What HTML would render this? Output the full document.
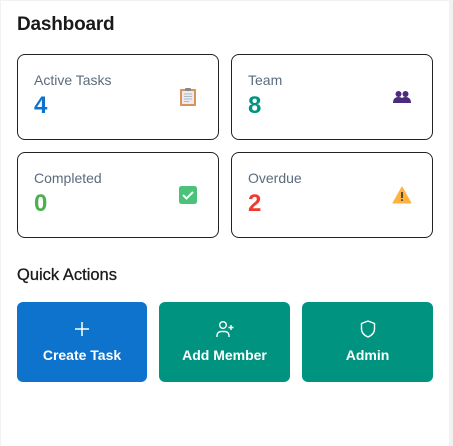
<!DOCTYPE html>
<html><head><style>
*{margin:0;padding:0;box-sizing:border-box}
html,body{width:453px;height:446px;background:#f2f2f2;overflow:hidden;font-family:"Liberation Sans",sans-serif}
.panel{position:absolute;left:1px;top:1px;width:448px;height:445px;background:#fff}
h1{position:absolute;left:17px;top:14px;font-size:19px;font-weight:bold;color:#1a1a1a;letter-spacing:-0.2px}
h2{position:absolute;left:17px;top:266px;font-size:16.5px;font-weight:normal;color:#1a1a1a;-webkit-text-stroke:0.3px #1a1a1a}
.card{position:absolute;width:202px;height:86px;border:1px solid #222;border-radius:8px;background:#fff}
.lbl{position:absolute;left:16px;top:17px;font-size:14px;color:#5b6b7d}
.num{position:absolute;left:16px;top:37px;font-size:24px;font-weight:bold}
.ic{position:absolute;left:160px;top:32px;width:20px;height:20px}
.btn{position:absolute;top:302px;height:80px;border-radius:6px;color:#fff;text-align:center}
.btn svg{position:absolute;left:50%;top:17px;margin-left:-10px}
.btn span{position:absolute;left:0;right:0;top:45px;font-size:14px;font-weight:bold}
</style></head><body>
<div class="panel"></div>
<h1>Dashboard</h1>
<div class="card" style="left:17px;top:54px"><div class="lbl">Active Tasks</div><div class="num" style="color:#0b72d0">4</div>
<svg class="ic" viewBox="0 0 20 20"><rect x="2" y="2" width="16" height="17" rx="1" fill="#d8935a"/><rect x="4" y="4" width="12" height="13" fill="#eceaf0"/><rect x="7" y="1" width="6" height="3" rx="1" fill="#888"/><path d="M6 7h8M6 9.5h8M6 12h8M6 14.5h5" stroke="#9aa" stroke-width="0.8"/></svg></div>
<div class="card" style="left:231px;top:54px"><div class="lbl">Team</div><div class="num" style="color:#009480">8</div>
<svg class="ic" viewBox="0 0 20 20"><circle cx="6.5" cy="7" r="3" fill="#4a2b7e"/><circle cx="13.5" cy="7" r="3" fill="#4a2b7e"/><path d="M1 16c0-4 2-6 5.5-6S12 12 12 16z" fill="#4a2b7e"/><path d="M8 16c0-4 2-6 5.5-6S19 12 19 16z" fill="#4a2b7e"/></svg></div>
<div class="card" style="left:17px;top:152px"><div class="lbl">Completed</div><div class="num" style="color:#4caf50">0</div>
<svg class="ic" viewBox="0 0 20 20"><rect x="1" y="1" width="18" height="18" rx="2.5" fill="#4bc27a"/><path d="M5 10l3.5 3.5L15 7" stroke="#fff" stroke-width="2" fill="none"/></svg></div>
<div class="card" style="left:231px;top:152px"><div class="lbl">Overdue</div><div class="num" style="color:#f03a30">2</div>
<svg class="ic" viewBox="0 0 20 20"><path d="M10 2L19 18H1z" fill="#ffb23e" stroke="#ffb23e" stroke-linejoin="round"/><rect x="9.2" y="7" width="1.6" height="6" fill="#333"/><rect x="9.2" y="14.3" width="1.6" height="1.6" fill="#333"/></svg></div>
<h2>Quick Actions</h2>
<div class="btn" style="left:17px;width:130px;background:#0d73cc"><svg width="20" height="20" viewBox="0 0 20 20"><path d="M10 3v14M3 10h14" stroke="#fff" stroke-width="1.5"/></svg><span>Create Task</span></div>
<div class="btn" style="left:159px;width:131px;background:#009480"><svg width="20" height="20" viewBox="0 0 20 20"><circle cx="8" cy="6" r="3.3" stroke="#fff" stroke-width="1.4" fill="none"/><path d="M2 18v-1.5a4 4 0 0 1 4-4h4a4 4 0 0 1 4 4V18M16 6v5M13.5 8.5h5" stroke="#fff" stroke-width="1.4" fill="none"/></svg><span>Add Member</span></div>
<div class="btn" style="left:302px;width:131px;background:#009480"><svg width="20" height="20" viewBox="0 0 20 20"><path d="M10 2l6.5 2.5V10c0 4-3 6.5-6.5 8-3.5-1.5-6.5-4-6.5-8V4.5z" stroke="#fff" stroke-width="1.4" fill="none" stroke-linejoin="round"/></svg><span>Admin</span></div>
</body></html>
